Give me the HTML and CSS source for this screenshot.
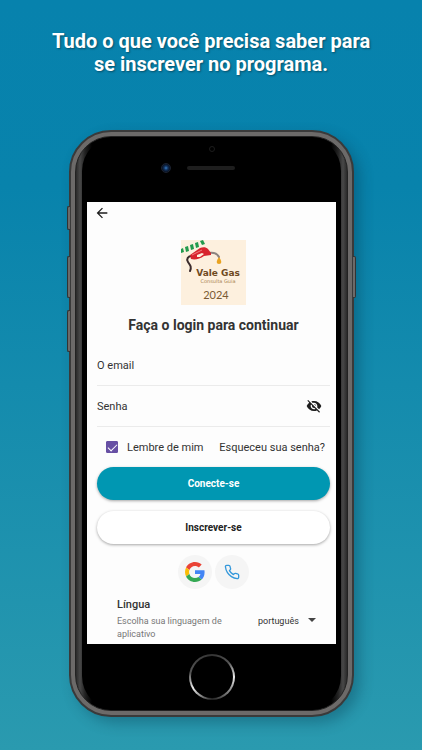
FILE: index.html
```html
<!DOCTYPE html>
<html lang="pt-BR">
<head>
  <meta charset="UTF-8" />
  <meta name="viewport" content="width=device-width, initial-scale=1" />
  <title>Vale Gas - Login</title>
  <link rel="stylesheet" href="styles.css">
</head>
<body>

  <header>
    <h1>Tudo o que você precisa saber para se inscrever no programa.</h1>
  </header>

  <!-- Moldura do celular -->
  <div class="phone">
    <span class="side-button mute"></span>
    <span class="side-button volume-up"></span>
    <span class="side-button volume-down"></span>
    <span class="side-button power"></span>

    <div class="edge">
      <div class="face">

        <div class="sensors">
          <span class="camera"></span>
          <div class="sensor-row">
            <span class="lens"></span>
            <span class="speaker"></span>
          </div>
        </div>

        <!-- Tela de login -->
        <main class="screen">
          <button class="back" type="button" aria-label="Voltar">
            <svg viewBox="0 0 24 24" width="16" height="16"><path d="M20 11H7.8l5.6-5.6L12 4l-8 8 8 8 1.4-1.4L7.8 13H20z" fill="#1d1d1d"/></svg>
          </button>

          <svg class="logo" viewBox="0 0 65 65" width="65" height="65">
            <rect width="65" height="65" fill="#fdf0de"/>
            <g fill="#239a4c">
              <path d="M0 9l2-1 1 4-3 1z"/>
              <path d="M4 7l3-1 1 5-3 1z"/>
              <path d="M9 5l3-1 1 5-3 1z"/>
              <path d="M14 3l3-1 1 5-3 1z"/>
              <path d="M19 1l3-1 2 4-3 1z"/>
            </g>
            <path d="M11 16c-4 0-6 3-4 6s4 5 2 9" fill="none" stroke="#3b2b2c" stroke-width="2" stroke-linecap="round"/>
            <path d="M27 13c5-1 9 0 11 4" fill="none" stroke="#8d8580" stroke-width="2" stroke-linecap="round"/>
            <path d="M9 15l10-7c3-1 6-1 8 1l3 4v2l-7 1c-4 3-9 4-13 3z" fill="#d8242d"/>
            <path d="M16 15l5-2 2 1-4 3h-3z" fill="#fdf0de"/>
            <path d="M11 15l10-5" stroke="#f27a7e" stroke-width="1"/>
            <path d="M38 17c3 4 3 7 0 7s-3-3 0-7z" fill="#e9a321"/>
            <text class="logo-name" x="37" y="36" text-anchor="middle">Vale Gas</text>
            <text class="logo-sub" x="37" y="43" text-anchor="middle">Consulta Guia</text>
            <text class="logo-year" x="35" y="59" text-anchor="middle">2024</text>
          </svg>

          <h2>Faça o login para continuar</h2>

          <form>
            <div class="field">
              <label for="email">O email</label>
              <input id="email" type="email" />
            </div>

            <div class="field">
              <label for="senha">Senha</label>
              <input id="senha" type="password" />
              <button class="toggle" type="button" aria-label="Mostrar senha">
                <svg viewBox="0 0 24 24" width="16" height="16"><path fill="#1d1d1d" d="M12 7c2.76 0 5 2.24 5 5 0 .65-.13 1.26-.36 1.83l2.92 2.92c1.51-1.26 2.7-2.89 3.43-4.75-1.73-4.39-6-7.5-11-7.5-1.4 0-2.74.25-3.98.7l2.16 2.16C10.74 7.13 11.35 7 12 7zM2 4.27l2.28 2.28.46.46C3.08 8.3 1.78 10.02 1 12c1.73 4.39 6 7.5 11 7.5 1.55 0 3.03-.3 4.38-.84l.42.42L19.73 22 21 20.73 3.27 3 2 4.27zM7.53 9.8l1.55 1.55c-.05.21-.08.43-.08.65 0 1.66 1.34 3 3 3 .22 0 .44-.03.65-.08l1.55 1.55c-.67.33-1.41.53-2.2.53-2.76 0-5-2.24-5-5 0-.79.2-1.53.53-2.2zm4.31-.78l3.15 3.15.02-.16c0-1.66-1.34-3-3-3l-.17.01z"/></svg>
              </button>
            </div>

            <div class="options">
              <label class="remember"><input type="checkbox" checked /> Lembre de mim</label>
              <a href="#">Esqueceu sua senha?</a>
            </div>

            <button class="btn primary" type="submit">Conecte-se</button>
            <button class="btn" type="button">Inscrever-se</button>
          </form>

          <div class="social">
            <button type="button" aria-label="Google">
              <svg viewBox="0 0 48 48" width="20" height="20">
                <path fill="#ea4335" d="M24 9.5c3.54 0 6.71 1.22 9.21 3.6l6.85-6.85C35.9 2.38 30.47 0 24 0 14.62 0 6.51 5.38 2.56 13.22l7.98 6.19C12.43 13.72 17.74 9.5 24 9.5z"/>
                <path fill="#4285f4" d="M46.98 24.55c0-1.57-.15-3.09-.38-4.55H24v9.02h12.94c-.58 2.96-2.26 5.48-4.78 7.18l7.73 6c4.51-4.18 7.09-10.36 7.09-17.65z"/>
                <path fill="#fbbc05" d="M10.53 28.59c-.48-1.45-.76-2.99-.76-4.59s.27-3.14.76-4.59l-7.98-6.19C.92 16.46 0 20.12 0 24c0 3.88.92 7.54 2.56 10.78l7.97-6.19z"/>
                <path fill="#34a853" d="M24 48c6.48 0 11.93-2.13 15.89-5.81l-7.73-6c-2.15 1.45-4.92 2.3-8.16 2.3-6.26 0-11.57-4.22-13.47-9.91l-7.98 6.19C6.51 42.62 14.62 48 24 48z"/>
              </svg>
            </button>
            <button type="button" aria-label="Telefone">
              <svg viewBox="0 0 24 24" width="16" height="16"><path d="M22 16.92v3a2 2 0 0 1-2.18 2 19.79 19.79 0 0 1-8.63-3.07 19.5 19.5 0 0 1-6-6 19.79 19.79 0 0 1-3.07-8.67A2 2 0 0 1 4.11 2h3a2 2 0 0 1 2 1.72c.13.96.36 1.9.7 2.81a2 2 0 0 1-.45 2.11L8.09 9.91a16 16 0 0 0 6 6l1.27-1.27a2 2 0 0 1 2.11-.45c.91.34 1.85.57 2.81.7A2 2 0 0 1 22 16.92z" fill="none" stroke="#3498db" stroke-width="2" stroke-linejoin="round"/></svg>
            </button>
          </div>

          <div class="language">
            <div class="language-text">
              <label for="lingua">Língua</label>
              <p>Escolha sua linguagem de aplicativo</p>
            </div>
            <div class="select">
              <select id="lingua">
                <option>português</option>
                <option>english</option>
                <option>español</option>
              </select>
            </div>
          </div>
        </main>

        <div class="home"><span></span></div>

      </div>
    </div>
  </div>

</body>
</html>
```
FILE: styles.css
```css
* {
  box-sizing: border-box;
  margin: 0;
  padding: 0;
  font-family: Roboto, sans-serif;
}

body {
  background: linear-gradient(180deg, #0782ad 0%, #0883ac 25%, #2a9aaf 100%);
  min-height: 100vh;
  padding-bottom: 32px;
  color: #333;
}

header {
  padding: 30px 50px 54px;
}

h1 {
  font-size: 20px;
  line-height: 23px;
  font-weight: 700;
  text-align: center;
  color: #fff;
  text-shadow: 1px 1px 2px rgba(0, 0, 0, 0.4);
}

/* Moldura do celular */
.phone {
  position: relative;
  margin: 0 68px 0 69px;
  padding: 4px;
  background: #6c6a69;
  border: 2px solid #3a3a3a;
  border-radius: 42px;
  box-shadow: 6px 6px 14px rgba(0, 40, 60, 0.3);
}

.edge {
  padding: 0 6px;
  border: 1px solid #222;
  border-radius: 36px;
  background: linear-gradient(90deg, #2a2a2a 0, #484848 4px, #222 9px, #000 16px, #000 calc(100% - 16px), #222 calc(100% - 9px), #484848 calc(100% - 4px), #2a2a2a 100%);
}

.face {
  padding: 0 5px;
  background: #000;
  border-radius: 34px;
}

.side-button {
  position: absolute;
  left: -4px;
  width: 3px;
  background: #6c6a69;
  border: 1px solid #333;
  border-right: 0;
  border-radius: 2px 0 0 2px;
}

.mute {
  top: 74px;
  height: 24px;
}

.volume-up {
  top: 124px;
  height: 42px;
}

.volume-down {
  top: 178px;
  height: 42px;
}

.power {
  left: auto;
  right: -4px;
  top: 124px;
  height: 42px;
  transform: scaleX(-1);
}

.sensors {
  padding: 9px 0 32px;
}

.camera {
  display: block;
  width: 6px;
  height: 6px;
  margin: 0 auto 13px;
  border: 1px solid #1c1c1c;
  border-radius: 50%;
}

.sensor-row {
  display: flex;
  justify-content: center;
  align-items: center;
  gap: 16px;
  height: 5px;
  padding-right: 28px;
}

.lens {
  flex: none;
  width: 10px;
  height: 10px;
  border: 1px solid #1b2230;
  border-radius: 50%;
  background: radial-gradient(circle, #3a7cc0 0, #10305c 2px, #0a1220 4px);
}

.speaker {
  width: 48px;
  height: 4px;
  background: #1e1e1e;
  border-radius: 2px;
}

/* Tela */
.screen {
  display: flex;
  flex-direction: column;
  padding: 3px 6px 3px 10px;
  background: #fdfdfd;
}

button {
  display: flex;
  justify-content: center;
  align-items: center;
  border: 0;
  background: none;
  cursor: pointer;
}

.back {
  width: 16px;
  height: 16px;
  margin-left: -3px;
}

.logo {
  align-self: center;
  margin-top: 19px;
}

.logo-name {
  font-family: "DejaVu Sans", sans-serif;
  font-size: 9px;
  font-weight: 700;
  fill: #6f4a1f;
}

.logo-sub {
  font-family: "DejaVu Sans", sans-serif;
  font-size: 5px;
  fill: #a9844f;
}

.logo-year {
  font-family: Lato, sans-serif;
  font-size: 11px;
  fill: #7a5a33;
}

h2 {
  margin: 11px 0;
  font-size: 14px;
  line-height: 18px;
  font-weight: 700;
  text-align: center;
}

.field {
  display: flex;
  align-items: center;
  height: 41px;
  border-bottom: 1px solid #ebebeb;
  font-size: 11px;
}

.field input {
  flex: 1;
  min-width: 0;
  height: 24px;
  padding-left: 8px;
  border: 0;
  outline: none;
  background: none;
  font-size: 11px;
}

.toggle {
  width: 16px;
  height: 16px;
  margin-right: 8px;
}

.options {
  display: flex;
  justify-content: space-between;
  align-items: center;
  height: 40px;
  padding: 0 5px 0 9px;
  font-size: 11px;
}

.options a {
  color: #333;
  text-decoration: none;
}

.remember {
  display: flex;
  align-items: center;
  gap: 9px;
}

.remember input {
  appearance: none;
  display: flex;
  justify-content: center;
  width: 12px;
  height: 12px;
  border: 1px solid #6750a4;
  border-radius: 1px;
}

.remember input:checked {
  background: #6750a4;
}

.remember input:checked::after {
  content: "";
  width: 4px;
  height: 8px;
  border: solid #fff;
  border-width: 0 1px 1px 0;
  transform: rotate(45deg);
}

.btn {
  width: 100%;
  height: 33px;
  margin-bottom: 11px;
  border-radius: 17px;
  background: #fff;
  color: #222;
  font-size: 10px;
  font-weight: 700;
  box-shadow: 0 1px 3px rgba(0, 0, 0, 0.35);
}

.btn.primary {
  background: #0097b2;
  color: #fff;
}

.social {
  display: flex;
  justify-content: center;
  gap: 3px;
}

.social button {
  width: 34px;
  height: 34px;
  border-radius: 50%;
  background: #f5f5f5;
}

.language {
  display: flex;
  justify-content: space-between;
  align-items: center;
  padding: 8px 14px 0 20px;
}

.language-text {
  width: 124px;
}

.language label {
  display: block;
  margin-bottom: 2px;
  font-size: 11px;
  line-height: 16px;
  font-weight: 500;
}

.language p {
  font-size: 9px;
  line-height: 13px;
  color: #777;
}

.select {
  position: relative;
}

.select::after {
  content: "";
  position: absolute;
  right: 0;
  top: 9px;
  border: 4px solid transparent;
  border-top-color: #444;
  border-bottom: 0;
  pointer-events: none;
}

.select select {
  appearance: none;
  padding-right: 17px;
  border: 0;
  background: none;
  color: #333;
  font-size: 9px;
  line-height: 16px;
}

/* Botão home */
.home {
  display: flex;
  justify-content: center;
  padding: 10px 0;
}

.home span {
  width: 46px;
  height: 46px;
  padding: 2px;
  border-radius: 50%;
  background: conic-gradient(#333, #555 50deg, #eee 90deg, #999 120deg, #222 180deg, #eee 240deg, #555 280deg, #333);
}

.home span::after {
  content: "";
  display: block;
  height: 100%;
  border-radius: 50%;
  background: #000;
}
```
